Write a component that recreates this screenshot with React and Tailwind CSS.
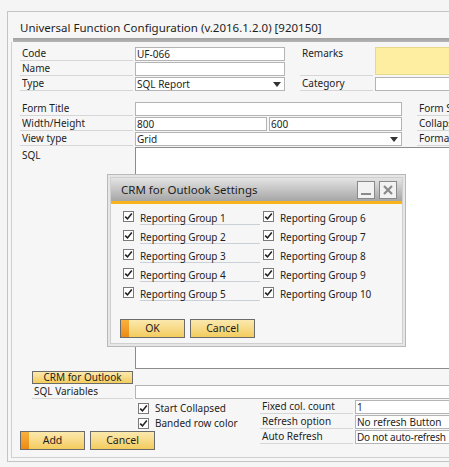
import React from "react";

const font = { fontFamily: '"Noto Sans", "Open Sans", sans-serif' };

function Label({ children, className = "" }) {
  return (
    <div className={`h-[14px] border-b border-[#d6d6d6] pl-[2px] leading-[13px] text-[10px] text-[#1e1e1e] whitespace-nowrap overflow-hidden ${className}`}>
      {children}
    </div>
  );
}

function Field({ children, className = "", arrow = false }) {
  return (
    <div className={`relative h-[14px] border border-[#b4b4b4] bg-white pl-[1px] leading-[12px] text-[10px] text-[#1e1e1e] whitespace-nowrap overflow-hidden ${className}`}>
      {children}
      {arrow && (
        <svg className="absolute right-[3px] top-[4px]" width="8" height="5" viewBox="0 0 8 5">
          <path d="M0 0 H8 L4 5 Z" fill="#333" />
        </svg>
      )}
    </div>
  );
}

function Check({ checked = true }) {
  return (
    <div className="w-[11px] h-[11px] border border-[#7a7a7a] bg-white flex items-center justify-center shrink-0">
      {checked && (
        <svg width="9" height="9" viewBox="0 0 9 9">
          <path d="M1.2 4.6 L3.5 6.9 L7.8 1.6" stroke="#222" strokeWidth="1.6" fill="none" />
        </svg>
      )}
    </div>
  );
}

function YButton({ children, orange = false, className = "" }) {
  return (
    <div className={`relative flex items-center justify-center border border-[#6b6b6b] bg-gradient-to-b from-[#fbe9ad] to-[#f3cc5c] text-[10.5px] text-[#1e1e1e] ${className}`}>
      {orange && <div className="absolute left-0 top-0 bottom-0 w-[8px] bg-gradient-to-b from-[#f7b23b] to-[#ec8a12]" />}
      <span className="relative">{children}</span>
    </div>
  );
}

function Dialog() {
  const left = [1, 2, 3, 4, 5];
  const right = [6, 7, 8, 9, 10];
  return (
    <div className="absolute left-[107px] top-[174px] w-[299px] h-[173px] border border-[#b9b9b9] bg-[#e6e6e6] p-[2px]">
      <div className="h-full border border-[#cfcfcf] bg-[#f6f6f6] flex flex-col">
        <div className="h-[23px] bg-gradient-to-b from-[#e4e4e4] to-[#a6a6a6] flex items-center justify-between pl-[10px] pr-[5px]">
          <span className="text-[11.5px] text-[#1e1e1e] pt-[1px]">CRM for Outlook Settings</span>
          <div className="flex gap-[4px]">
            <div className="w-[18px] h-[18px] border border-[#8a8a8a] bg-[#f2f2f2] flex items-end justify-center pb-[3px]">
              <div className="w-[10px] h-[2px] bg-[#8a8a8a]" />
            </div>
            <div className="w-[18px] h-[18px] border border-[#8a8a8a] bg-[#f2f2f2] flex items-center justify-center">
              <svg width="10" height="10" viewBox="0 0 10 10">
                <path d="M1 1 L9 9 M9 1 L1 9" stroke="#8a8a8a" strokeWidth="2.2" />
              </svg>
            </div>
          </div>
        </div>
        <div className="h-[3px] bg-[#f6b31a]" />
        <div className="flex pl-[12px] pt-[7px]">
          <div className="flex flex-col gap-[8px] w-[140px]">
            {left.map((n) => (
              <div key={n} className="flex items-center h-[11px]">
                <Check />
                <div className="ml-[6px] w-[120px] h-[14px] border-b border-[#c9d0d8] text-[10px] leading-[14px] text-[#1e1e1e] mt-[3px] tracking-[-0.1px]">
                  Reporting Group {n}
                </div>
              </div>
            ))}
          </div>
          <div className="flex flex-col gap-[8px]">
            {right.map((n) => (
              <div key={n} className="flex items-center h-[11px]">
                <Check />
                <div className="ml-[6px] text-[10px] leading-[14px] text-[#1e1e1e] mt-[3px] tracking-[-0.1px]">Reporting Group {n}</div>
              </div>
            ))}
          </div>
        </div>
        <div className="flex gap-[5px] pl-[9px] mt-[21px]">
          <YButton orange className="w-[65px] h-[19px]">OK</YButton>
          <YButton className="w-[65px] h-[19px]">Cancel</YButton>
        </div>
      </div>
    </div>
  );
}

export default function App() {
  return (
    <div className="relative w-[449px] h-[467px] overflow-hidden bg-[#f5f5f5]" style={font}>
      <div className="ml-[7px] mt-[11px] w-[470px] h-[451px] border-l border-t border-b border-[#c4c4c4] bg-[#f6f6f6]">
        <div className="h-[26px] pl-[12px] pt-[7px] text-[11.5px] leading-[18px] text-[#1e1e1e] whitespace-nowrap">
          Universal Function Configuration (v.2016.1.2.0) [920150]
        </div>
        <div className="ml-[5px] h-[4px] bg-gradient-to-b from-[#a2a2a2] to-[#b4b4b4]" />
        <div className="ml-[3px] h-[416px] border-l border-b border-[#d0d0d0]">
          <div className="flex pl-[8px] pt-[5px]">
            <div className="flex flex-col gap-[1px]">
              <div className="flex gap-[2px]">
                <Label className="w-[113px]">Code</Label>
                <Field className="w-[150px]">UF-066</Field>
              </div>
              <div className="flex gap-[2px]">
                <Label className="w-[113px]">Name</Label>
                <Field className="w-[150px]" />
              </div>
              <div className="flex gap-[2px]">
                <Label className="w-[113px]">Type</Label>
                <Field className="w-[150px]" arrow>SQL Report</Field>
              </div>
            </div>
            <div className="flex flex-col gap-[1px] ml-[15px]">
              <div className="flex gap-[2px]">
                <div className="w-[73px] h-[29px] border-b border-[#d6d6d6] pl-[2px] text-[10px] leading-[13px] text-[#1e1e1e]">Remarks</div>
                <div className="w-[120px] h-[28px] bg-[#fdeea1] border border-[#e8d98a]" />
              </div>
              <div className="flex gap-[2px]">
                <Label className="w-[73px]">Category</Label>
                <Field className="w-[120px]" />
              </div>
            </div>
          </div>

          <div className="flex pl-[8px] mt-[11px]">
            <div className="flex flex-col gap-[1px]">
              <div className="flex gap-[2px]">
                <Label className="w-[113px]">Form Title</Label>
                <Field className="w-[267px]" />
              </div>
              <div className="flex gap-[2px]">
                <Label className="w-[113px]">Width/Height</Label>
                <Field className="w-[132px]">800</Field>
                <Field className="w-[133px]">600</Field>
              </div>
              <div className="flex gap-[2px]">
                <Label className="w-[113px]">View type</Label>
                <Field className="w-[267px]" arrow>Grid</Field>
              </div>
            </div>
            <div className="flex flex-col gap-[1px] ml-[15px]">
              <Label className="w-[60px]">Form Settings</Label>
              <Label className="w-[60px]">Collapsed</Label>
              <Label className="w-[60px]">Formatting</Label>
            </div>
          </div>

          <div className="flex pl-[8px] mt-[1px] gap-[2px]">
            <div className="w-[113px] pl-[2px] pt-[2px] text-[10px] leading-[13px] text-[#1e1e1e]">SQL</div>
            <div className="w-[330px] h-[222px] border border-[#8c8c8c] border-r-0 bg-white" />
          </div>

          <div className="pl-[20px] mt-[2px]">
            <YButton className="w-[101px] h-[13px] text-[10px] leading-[11px]">CRM for Outlook</YButton>
          </div>

          <div className="flex pl-[20px] mt-[1px] gap-[2px]">
            <Label className="w-[101px]">SQL Variables</Label>
            <Field className="w-[330px] border-r-0" />
          </div>

          <div className="flex pl-[8px] mt-[1px]">
            <div className="w-[240px] flex flex-col">
              <div className="flex items-center h-[15px] pl-[118px] pt-[2px]">
                <Check />
                <span className="ml-[6px] text-[10px] text-[#1e1e1e]">Start Collapsed</span>
              </div>
              <div className="flex items-center h-[15px] pl-[118px] pt-[2px]">
                <Check />
                <span className="ml-[6px] text-[10px] text-[#1e1e1e]">Banded row color</span>
              </div>
              <div className="flex gap-[5px] mt-[1px]">
                <YButton orange className="w-[65px] h-[19px]">Add</YButton>
                <YButton className="w-[65px] h-[19px]">Cancel</YButton>
              </div>
            </div>
            <div className="flex flex-col gap-[1px]">
              <div className="flex gap-[2px]">
                <Label className="w-[93px]">Fixed col. count</Label>
                <Field className="w-[120px]">1</Field>
              </div>
              <div className="flex gap-[2px]">
                <Label className="w-[93px]">Refresh option</Label>
                <Field className="w-[120px]">No refresh Button</Field>
              </div>
              <div className="flex gap-[2px]">
                <Label className="w-[93px]">Auto Refresh</Label>
                <Field className="w-[120px] tracking-[-0.2px]">Do not auto-refresh</Field>
              </div>
            </div>
          </div>
        </div>
      </div>
      <Dialog />
    </div>
  );
}
